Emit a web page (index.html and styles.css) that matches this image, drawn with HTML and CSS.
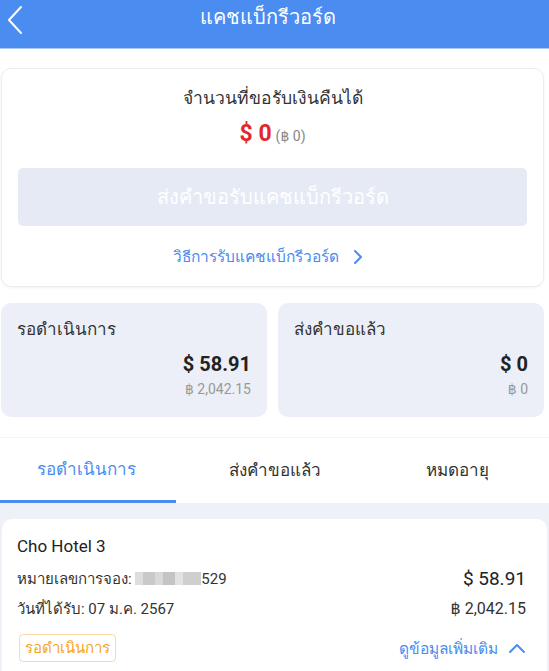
FILE: index.html
```html
<!DOCTYPE html>
<html lang="th">
<head>
<meta charset="utf-8">
<link rel="stylesheet" href="styles.css">
</head>
<body>
<header class="topbar">
  <span class="back">
    <svg width="18" height="30" viewBox="0 0 18 30"><path d="M15 2 L3 15 L15 28" fill="none" stroke="#fff" stroke-width="2" stroke-linecap="round" stroke-linejoin="round"/></svg>
  </span>
  <h1 class="title">แคชแบ็กรีวอร์ด</h1>
  <span></span>
</header>

<section class="top">
  <div class="claim-card">
    <div class="claim-title">จำนวนที่ขอรับเงินคืนได้</div>
    <div class="claim-amount"><span class="red">$ 0</span> <span class="sub">(฿ 0)</span></div>
    <div class="claim-btn">ส่งคำขอรับแคชแบ็กรีวอร์ด</div>
    <div class="claim-link">วิธีการรับแคชแบ็กรีวอร์ด
      <svg width="12" height="16" viewBox="0 0 12 16"><path d="M3 2 L9 8 L3 14" fill="none" stroke="#4a8cf0" stroke-width="2" stroke-linecap="round" stroke-linejoin="round"/></svg>
    </div>
  </div>

  <div class="stats">
    <div class="stat">
      <div class="stat-label">รอดำเนินการ</div>
      <div class="stat-usd">$ 58.91</div>
      <div class="stat-thb">฿ 2,042.15</div>
    </div>
    <div class="stat">
      <div class="stat-label">ส่งคำขอแล้ว</div>
      <div class="stat-usd">$ 0</div>
      <div class="stat-thb">฿ 0</div>
    </div>
  </div>
</section>

<nav class="tabs">
  <div class="tab active">รอดำเนินการ</div>
  <div class="tab">ส่งคำขอแล้ว</div>
  <div class="tab">หมดอายุ</div>
</nav>

<section class="list">
  <div class="item">
    <div class="item-name">Cho Hotel 3</div>
    <div class="item-row">
      <span>หมายเลขการจอง: <span class="blur"></span>529</span>
      <span class="item-usd">$ 58.91</span>
    </div>
    <div class="item-row">
      <span>วันที่ได้รับ: 07 ม.ค. 2567</span>
      <span class="item-thb">฿ 2,042.15</span>
    </div>
    <div class="item-foot">
      <span class="badge">รอดำเนินการ</span>
      <span class="more">ดูข้อมูลเพิ่มเติม
        <svg width="18" height="12" viewBox="0 0 18 12"><path d="M2 10 L9 3 L16 10" fill="none" stroke="#4a8cf0" stroke-width="2" stroke-linecap="round" stroke-linejoin="round"/></svg>
      </span>
    </div>
  </div>
</section>
</body>
</html>
```

FILE: styles.css
```css
* { box-sizing: border-box; }
html, body { margin: 0; padding: 0; }
body {
  width: 549px;
  height: 671px;
  overflow: hidden;
  font-family: Roboto, "Noto Sans", "DejaVu Sans", sans-serif;
  color: #222;
  background: #fff;
}
.topbar {
  height: 49px;
  background: #4a8cf0;
  display: grid;
  grid-template-columns: 34px 1fr 48px;
  align-items: center;
  border-bottom: 1px solid #a9c8f7;
}
.back { display: flex; padding-left: 6px; padding-bottom: 8px; }
.title {
  margin: 0;
  text-align: center;
  color: #fff;
  font-size: 20px;
  font-weight: 400;
  padding-bottom: 14px;
}
.top { padding: 19px 5px 0 1px; }
.claim-card {
  height: 219px;
  border: 1px solid #ececec;
  border-radius: 10px;
  box-shadow: 0 1px 3px rgba(0,0,0,0.05);
  display: flex;
  flex-direction: column;
  align-items: center;
  padding: 17px 16px 0 16px;
}
.claim-title { font-size: 17.5px; color: #333; line-height: 24px; }
.claim-amount { margin-top: 10px; line-height: 28px; display: flex; align-items: baseline; gap: 4px; }
.red { color: #e0282e; font-weight: 700; font-size: 23px; }
.sub { color: #888; font-size: 14px; }
.claim-btn {
  margin-top: 18px;
  width: 100%;
  height: 58px;
  border-radius: 5px;
  background: #e5eaf5;
  color: #fff;
  font-size: 20px;
  display: flex;
  align-items: center;
  justify-content: center;
}
.claim-link {
  margin-top: 18px;
  color: #4a8cf0;
  font-size: 15.5px;
  display: flex;
  align-items: center;
  gap: 13px;
  padding-right: 8px;
}
.stats {
  margin-top: 16px;
  display: grid;
  grid-template-columns: 1fr 1fr;
  gap: 11px;
}
.stat {
  height: 114px;
  border-radius: 10px;
  background: #eceff7;
  padding: 14px 16px 0 16px;
  display: flex;
  flex-direction: column;
}
.stat-label { font-size: 17px; color: #333; line-height: 24px; }
.stat-usd { text-align: right; font-size: 20px; font-weight: 700; color: #222; margin-top: 10px; line-height: 26px; }
.stat-thb { text-align: right; font-size: 14px; color: #999; margin-top: 2px; line-height: 20px; }
.tabs {
  margin-top: 20px;
  border-top: 1px solid #f2f3f6;
  display: grid;
  grid-template-columns: 1fr 1fr 1fr;
  height: 66px;
  background: #fff;
}
.tab {
  display: flex;
  align-items: center;
  justify-content: center;
  font-size: 17px;
  color: #333;
  padding-bottom: 2px;
}
.tab.active {
  color: #4a8cf0;
  border-bottom: 3px solid #4a8cf0;
  width: 176px;
  padding-top: 1px;
  padding-right: 4px;
}
.list {
  background: #eef1f7;
  padding: 16px 2px 0 2px;
  height: 168px;
}
.item {
  background: #fff;
  border-radius: 10px 10px 0 0;
  padding: 15px 21px 0 15px;
  height: 152px;
}
.item-name { font-size: 17px; line-height: 24px; color: #222; }
.item-row {
  display: flex;
  justify-content: space-between;
  align-items: center;
  font-size: 15px;
  color: #333;
  line-height: 22px;
  margin-top: 10px;
}
.item-row + .item-row { margin-top: 8px; }
.item-usd { font-size: 19px; color: #222; }
.item-thb { font-size: 16px; color: #333; }
.blur {
  display: inline-block;
  width: 66px;
  height: 13px;
  background: linear-gradient(90deg, #ddd 0 12%, #c9c9c9 12% 30%, #d9d9d9 30% 42%, #c4c4c4 42% 60%, #e2e2e2 60% 72%, #cfcfcf 72% 100%);
  vertical-align: -1px;
}
.item-foot {
  margin-top: 14px;
  display: flex;
  justify-content: space-between;
  align-items: center;
}
.badge {
  font-size: 15px;
  color: #f5a524;
  border: 1px solid #fbd9a8;
  border-radius: 4px;
  padding: 3px 5px;
  line-height: 20px;
  margin-left: 2px;
}
.more {
  color: #4a8cf0;
  font-size: 15.5px;
  display: flex;
  align-items: center;
  gap: 10px;
}
```
